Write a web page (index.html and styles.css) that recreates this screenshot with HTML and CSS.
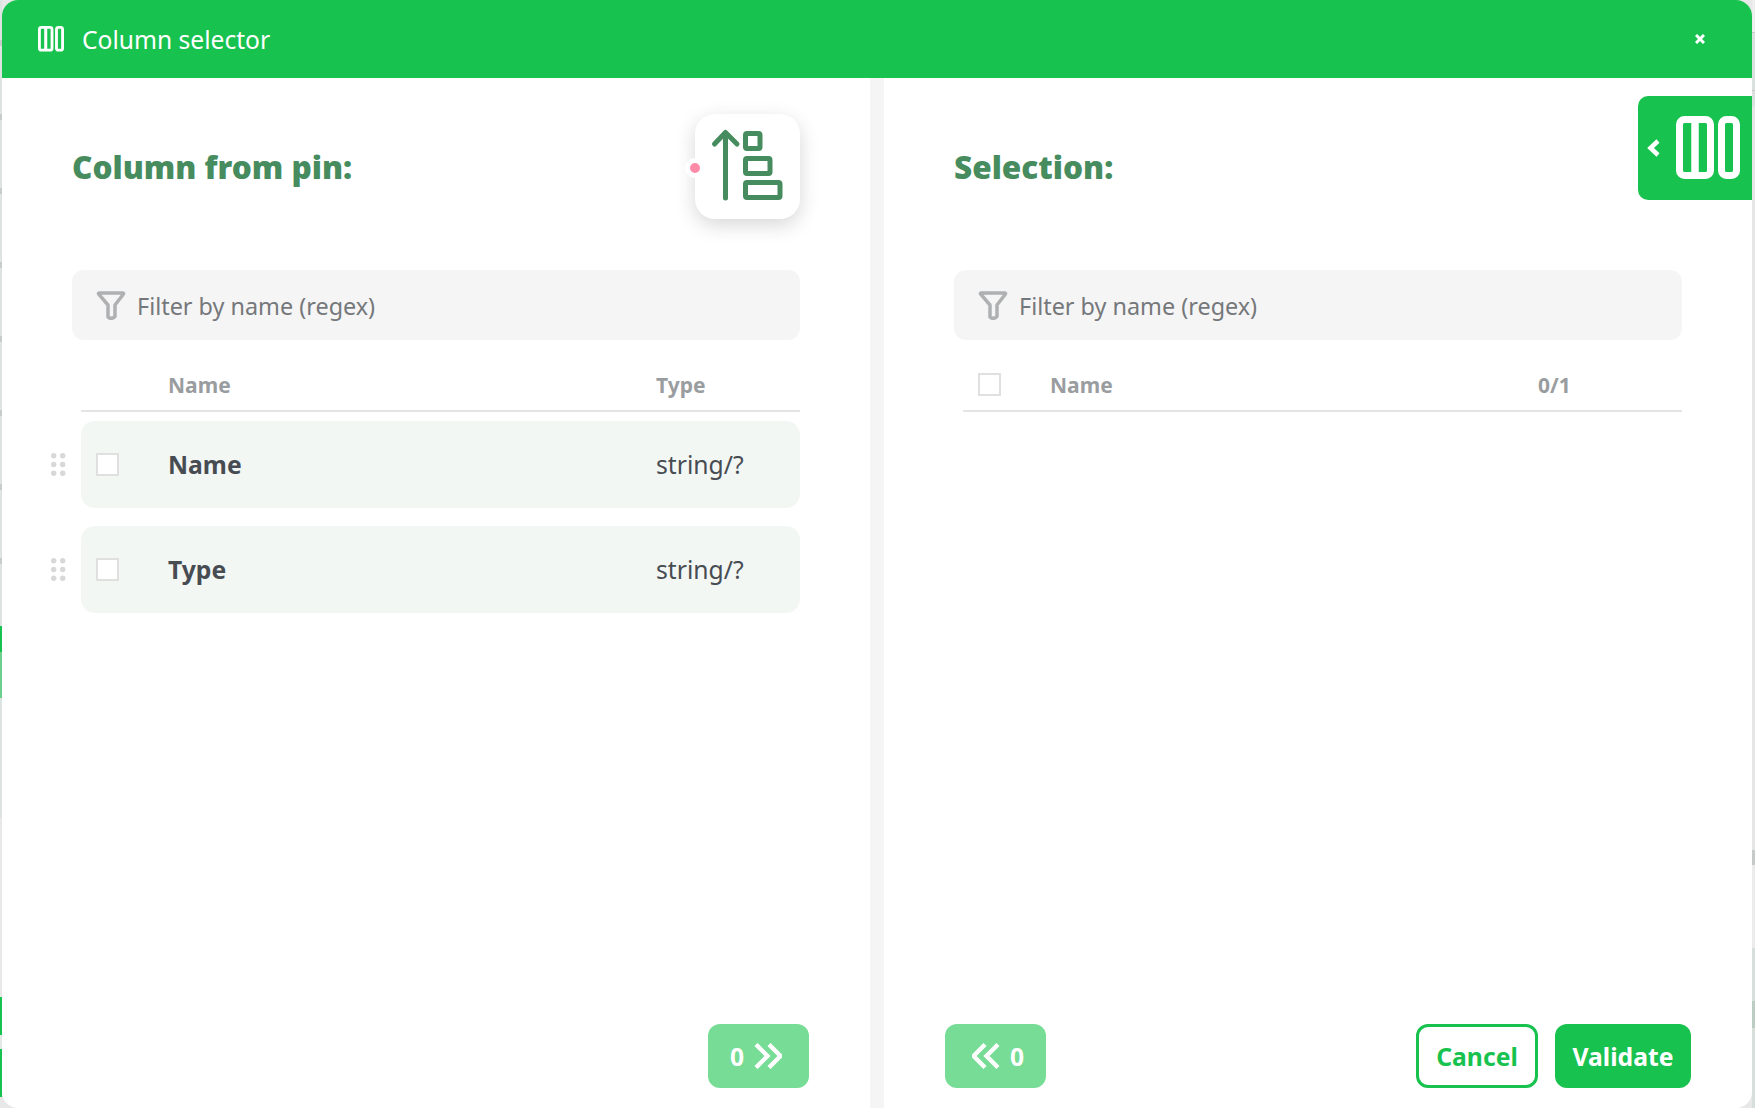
FILE: index.html
```html
<!DOCTYPE html>
<html lang="en">
<head>
<meta charset="utf-8">
<title>Column selector</title>
<link rel="stylesheet" href="styles.css">
</head>
<body>
<svg class="defs" width="0" height="0" aria-hidden="true">
  <symbol id="columns" viewBox="0 0 64 64">
    <rect x="3.500" y="3.500" width="31" height="56" rx="5" fill="none" stroke="currentColor" stroke-width="7"/>
    <path d="M19 3V60" fill="none" stroke="currentColor" stroke-width="7.500"/>
    <rect x="45.500" y="3.500" width="15" height="56" rx="5" fill="none" stroke="currentColor" stroke-width="7"/>
  </symbol>
  <symbol id="funnel" viewBox="0 0 30 30">
    <path d="M3 3H27Q28 3 27.300 4.200L19 15V26.500Q15 30 12 27V15L2.700 4.200Q2 3 3 3Z" fill="none" stroke="currentColor" stroke-width="3.500" stroke-linejoin="round"/>
  </symbol>
  <symbol id="dots" viewBox="0 0 15 23">
    <circle cx="2.700" cy="2.700" r="2.700"/><circle cx="11.700" cy="2.700" r="2.700"/>
    <circle cx="2.700" cy="11.500" r="2.700"/><circle cx="11.700" cy="11.500" r="2.700"/>
    <circle cx="2.700" cy="20.300" r="2.700"/><circle cx="11.700" cy="20.300" r="2.700"/>
  </symbol>
  <symbol id="chevrons" viewBox="0 0 28 26">
    <path d="M2 1.500L13.500 13L2 24.500M15 1.500L26.500 13L15 24.500" fill="none" stroke="currentColor" stroke-width="4.400"/>
  </symbol>
</svg>

<div class="strip strip-left">
  <i class="s s-a"></i><i class="s s-b"></i><i class="s s-c"></i><i class="s s-d"></i><i class="s s-e"></i><i class="s s-g"></i><i class="s s-h"></i><i class="s s-i"></i>
</div>

<main class="modal">
  <header class="modal-head">
    <svg class="head-icon"><use href="#columns"/></svg>
    <h1 class="modal-title">Column selector</h1>
    <svg class="close" viewBox="0 0 10 10"><path d="M1 1L9 9M9 1L1 9" fill="none" stroke="currentColor" stroke-width="3"/></svg>
  </header>

  <div class="modal-body">
    <section class="pane">
      <div class="pane-head">
        <h2 class="pane-title">Column from pin:</h2>
        <div class="node">
          <span class="pin"></span>
          <svg class="node-icon" viewBox="0 0 105 105">
            <path d="M30.500 84V19M19.500 30L30.500 18.500L42 30" fill="none" stroke="#468c5e" stroke-width="5" stroke-linecap="round" stroke-linejoin="round"/>
            <rect x="50.500" y="19.500" width="14.500" height="15" rx="1.500" fill="none" stroke="#468c5e" stroke-width="5"/>
            <rect x="50.500" y="44.500" width="24.500" height="15" rx="1.500" fill="none" stroke="#468c5e" stroke-width="5"/>
            <rect x="50.500" y="68.500" width="34.500" height="15" rx="1.500" fill="none" stroke="#468c5e" stroke-width="5"/>
          </svg>
        </div>
      </div>
      <label class="filter">
        <svg class="filter-icon"><use href="#funnel"/></svg>
        <span class="filter-text">Filter by name (regex)</span>
      </label>
      <div class="table-head">
        <span class="cell-check"></span>
        <span class="cell-name">Name</span>
        <span class="cell-type">Type</span>
      </div>
      <div class="rows">
        <div class="row-wrap">
          <svg class="drag"><use href="#dots"/></svg>
          <div class="row">
            <span class="cell-check"><span class="checkbox"></span></span>
            <span class="cell-name row-name">Name</span>
            <span class="cell-type row-type">string/?</span>
          </div>
        </div>
        <div class="row-wrap">
          <svg class="drag"><use href="#dots"/></svg>
          <div class="row">
            <span class="cell-check"><span class="checkbox"></span></span>
            <span class="cell-name row-name">Type</span>
            <span class="cell-type row-type">string/?</span>
          </div>
        </div>
      </div>
      <footer class="pane-foot foot-end">
        <button class="btn btn-move btn-next" type="button">0<svg class="chev"><use href="#chevrons"/></svg></button>
      </footer>
    </section>

    <div class="divider"></div>

    <section class="pane">
      <div class="pane-head">
        <h2 class="pane-title">Selection:</h2>
      </div>
      <label class="filter">
        <svg class="filter-icon"><use href="#funnel"/></svg>
        <span class="filter-text">Filter by name (regex)</span>
      </label>
      <div class="table-head">
        <span class="cell-check"><span class="checkbox"></span></span>
        <span class="cell-name">Name</span>
        <span class="cell-type">0/1</span>
      </div>
      <div class="rows"></div>
      <footer class="pane-foot">
        <button class="btn btn-move btn-prev" type="button"><svg class="chev chev-back"><use href="#chevrons"/></svg>0</button>
        <span class="foot-actions">
          <button class="btn btn-outline" type="button">Cancel</button>
          <button class="btn btn-solid" type="button">Validate</button>
        </span>
      </footer>
    </section>
  </div>

  <div class="side-tab">
    <svg class="tab-chev" viewBox="0 0 13 18"><path d="M11 2L3.500 9L11 16" fill="none" stroke="currentColor" stroke-width="4.500"/></svg>
    <svg class="tab-icon"><use href="#columns"/></svg>
  </div>
</main>

<div class="strip strip-right">
  <i class="s r-top"></i><i class="s r-a"></i><i class="s r-b"></i><i class="s r-c"></i><i class="s r-d"></i><i class="s r-e"></i><i class="s r-f"></i>
</div>
</body>
</html>
```
FILE: styles.css
```css
* { box-sizing: border-box; }
html, body { margin: 0; height: 100%; }
body {
  display: flex;
  width: 1755px;
  height: 1108px;
  overflow: hidden;
  background: #e8e8e8;
  font-family: "Noto Sans", "Open Sans", sans-serif;
  color: #474c52;
}
.defs { position: absolute; }

/* page that shows behind the modal */
.strip { display: flex; flex-direction: column; flex: none; }
.strip-left { width: 2px; }
.strip-right { width: 3px; }
.s { display: block; flex: none; }
.s-a { height: 626px; background: repeating-linear-gradient(#dde3e1 0 40px, #c9cccb 40px 46px, #dde3e1 46px 74px); }
.s-b { height: 26px; background: #18c24f; }
.s-c { height: 46px; background: #6bcf8d; }
.s-d { height: 120px; background: #dde3e1; }
.s-e { height: 179px; background: #e8e8e8; }
.s-g { height: 38px; background: #18c24f; }
.s-h { height: 14px; background: #e4e8e6; }
.s-i { height: 48px; background: #18c24f; }
.r-top { height: 107px; background: linear-gradient(#eee 0 32px, #c8c8c8 32px 33px, #dbe1df 33px 90px, #c8c8c8 90px 91px, #dbe1df 91px); }
.r-a { height: 743px; background: #e6e6e6; }
.r-b { height: 15px; background: #c6cbc9; }
.r-c { height: 83px; background: #ececec; }
.r-d { height: 53px; background: #d8dedc; }
.r-e { height: 27px; background: #bccdc3; }
.r-f { height: 80px; background: #d8dedc; }

.modal {
  position: relative;
  flex: 1;
  min-width: 0;
  display: flex;
  flex-direction: column;
  background: #fff;
  border-radius: 16px;
  overflow: hidden;
}
.modal-head {
  flex: none;
  height: 78px;
  display: flex;
  align-items: center;
  padding: 0 47px 0 36px;
  background: #18c24f;
  color: #fff;
}
.head-icon { width: 26px; height: 26px; margin-right: 18px; flex: none; }
.modal-title { margin: 0; padding-top: 3px; font-size: 24.6px; font-weight: 400; line-height: 1; }
.close { width: 10px; height: 10px; margin-left: auto; flex: none; }

.modal-body { flex: 1; min-height: 0; display: flex; }
.pane {
  flex: 1;
  min-width: 0;
  display: flex;
  flex-direction: column;
  padding: 36px 70px 20px;
}
.divider { flex: none; width: 14px; background: #f5f5f5; }

.pane-head {
  flex: none;
  height: 105px;
  margin-bottom: 51px;
  display: flex;
  justify-content: space-between;
  align-items: center;
}
.pane-title { margin: 0; font-size: 31.5px; font-weight: 900; color: #468c5e; line-height: 1; }

.node {
  position: relative;
  width: 105px;
  height: 105px;
  flex: none;
  background: #fff;
  border-radius: 20px;
  box-shadow: 0 6px 20px rgba(0, 0, 0, .16);
}
.node-icon { display: block; width: 105px; height: 105px; }
.pin {
  position: absolute;
  left: -10px;
  top: 44px;
  width: 20px;
  height: 20px;
  border-radius: 50%;
  border: 5px solid #fff;
  background: #fd8ba8;
}

.filter {
  flex: none;
  height: 70px;
  display: flex;
  align-items: center;
  padding-left: 24px;
  background: #f5f5f5;
  border-radius: 12px;
}
.filter-icon { width: 30px; height: 30px; margin-right: 11px; color: #aeb0b2; flex: none; }
.filter-text { padding-top: 1px; font-size: 23.4px; color: #75787b; }

.table-head {
  flex: none;
  height: 72px;
  margin-left: 9px;
  padding: 19px 0 0 15px;
  display: flex;
  align-items: center;
  border-bottom: 2px solid #e4e4e4;
  font-size: 21px;
  font-weight: 700;
  color: #9a9da0;
}
.cell-check { flex: none; width: 72px; display: flex; align-items: center; }
.cell-name { flex: none; width: 488px; }
.cell-type { flex: 1; min-width: 0; }

.checkbox {
  display: block;
  width: 23px;
  height: 23px;
  background: #fff;
  border: 2px solid #e0e0e0;
}

.rows {
  flex: 1;
  min-height: 0;
  margin-top: 9px;
  display: flex;
  flex-direction: column;
  gap: 18px;
}
.row-wrap {
  display: flex;
  align-items: center;
  gap: 15px;
  margin-left: -21px;
}
.drag { width: 15px; height: 23px; flex: none; fill: #d8d8d8; }
.row {
  flex: 1;
  min-width: 0;
  height: 87px;
  padding-left: 15px;
  display: flex;
  align-items: center;
  background: #f3f7f4;
  border-radius: 14px;
}
.row-name { font-size: 24.7px; font-weight: 700; }
.row-type { font-size: 24.7px; }

.pane-foot {
  flex: none;
  margin: 0 -9px;
  display: flex;
  justify-content: space-between;
  align-items: center;
}
.foot-end { justify-content: flex-end; }
.foot-actions { display: flex; gap: 17px; }

.btn {
  height: 64px;
  display: inline-flex;
  align-items: center;
  justify-content: center;
  padding: 0;
  border: 0;
  border-radius: 12px;
  font-family: inherit;
  font-size: 24.7px;
  font-weight: 700;
}
.btn-move { width: 101px; background: #77dc95; color: #fff; gap: 10px; }
.btn-next { padding-right: 5px; }
.btn-prev { padding-left: 5px; }
.btn-outline { width: 122px; background: #fff; color: #18c24f; border: 3px solid #18c24f; }
.btn-solid { width: 136px; background: #18c24f; color: #fff; }
.chev { width: 28px; height: 26px; flex: none; }
.chev-back { transform: scaleX(-1); }

.side-tab {
  position: absolute;
  top: 96px;
  right: 0;
  width: 114px;
  height: 104px;
  display: flex;
  align-items: center;
  padding-left: 9px;
  background: #18c24f;
  border-radius: 10px 0 0 10px;
  color: #fff;
}
.tab-chev { width: 13px; height: 18px; flex: none; margin-top: -1px; margin-right: 16px; }
.tab-icon { width: 64px; height: 64px; flex: none; margin-top: -1px; }
```
